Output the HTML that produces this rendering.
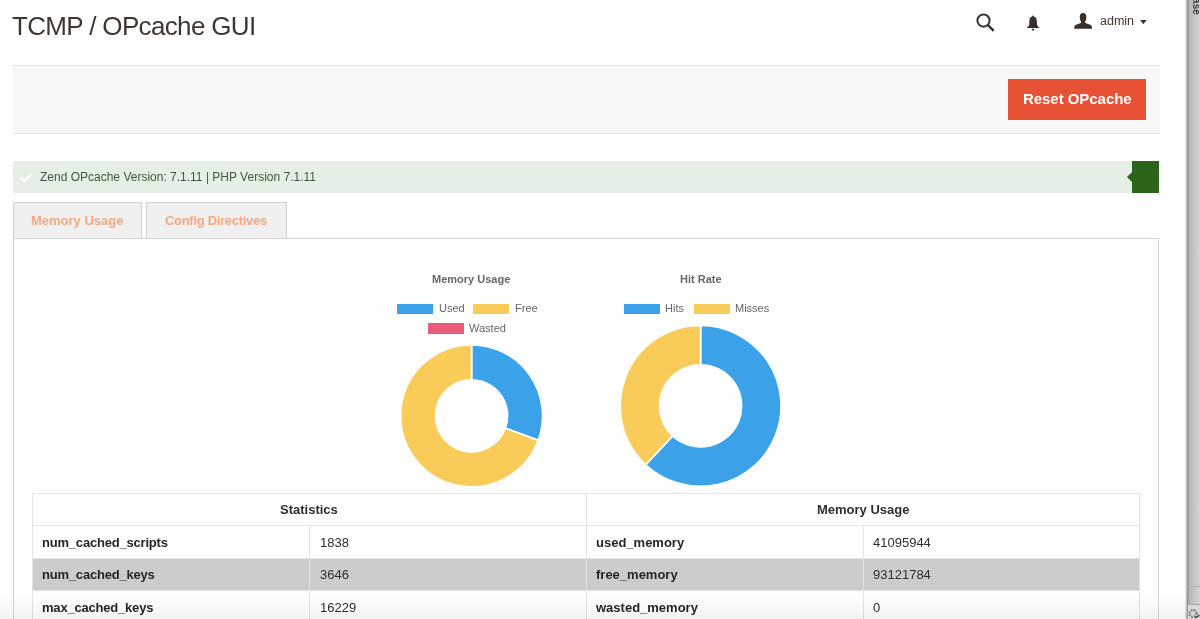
<!DOCTYPE html>
<html><head><meta charset="utf-8">
<style>
*{box-sizing:border-box;margin:0;padding:0}
html,body{width:1200px;height:619px;overflow:hidden;background:#fff}
body{position:relative;font-family:"Liberation Sans",sans-serif;color:#41362f}
.a{position:absolute;white-space:nowrap;line-height:1;will-change:transform}
#title{left:12px;top:12.5px;font-size:26px;letter-spacing:-0.65px;color:#41362f}
#admin{left:1099.5px;top:14.7px;font-size:12.5px;color:#41362f}
#strip{position:absolute;left:1185px;top:0;width:15px;height:619px;background:linear-gradient(90deg,#f4f4f4 0px,#dadada 1px,#a8a8a8 2px,#8f8f8f 3px,#b0b0b0 4px,#b9b9b9 5px,#d4d4d4 15px)}
#stript{position:absolute;left:1201px;top:-23.5px;transform-origin:0 0;transform:rotate(90deg);will-change:transform;font-size:10px;font-weight:bold;line-height:1;color:#3a3a3a;white-space:nowrap}
#actions{position:absolute;left:13px;top:65px;width:1147px;height:69px;background:#f8f8f8;border-top:1px solid #e3e3e3;border-bottom:1px solid #e3e3e3}
#btn{position:absolute;left:1008px;top:79px;width:138px;height:41px;background:#e85234}
#btntxt{left:1022.5px;top:91px;font-size:15px;font-weight:bold;letter-spacing:-0.05px;color:#fff}
#msg{position:absolute;left:13px;top:161px;width:1119px;height:32px;background:#e5efe5}
#msgblk{position:absolute;left:1132px;top:161px;width:27px;height:32px;background:#2c6519}
#msgtxt{left:40px;top:171.4px;font-size:12px;color:#3d5a3b}
.tab{position:absolute;top:202px;height:37px;background:#f0f0f0;border:1px solid #d0d0d0;border-bottom:none}
.tabtxt{top:214.3px;font-size:13px;font-weight:bold;color:#f1a983}
#panel{position:absolute;left:13px;top:238px;width:1146px;height:400px;border:1px solid #d4d4d4;background:#fff}
.ct{font-size:11px;font-weight:bold;color:#666}
.lg{font-size:11px;color:#666}
.box{position:absolute;height:10.5px;width:36px}
.hl{position:absolute;left:32px;width:1108px;height:1px;background:#e3e3e3}
.vl{position:absolute;width:1px;height:200px;background:#e3e3e3}
.gr{position:absolute;left:32px;width:1108px;height:32px;background:#cccccc}
.th,.tk,.td{font-size:13px;color:#2e2e2e}
.tk{color:#262626}
.th{font-weight:bold}
.tk{font-weight:bold;letter-spacing:-0.2px}
#fade{position:absolute;left:0;top:595px;width:1187px;height:24px;background:linear-gradient(180deg,rgba(0,0,0,0),rgba(0,0,0,0.05))}
</style></head><body>
<div class="a" id="title">TCMP / OPcache GUI</div>

<!-- header icons -->
<svg style="position:absolute;left:970px;top:8px" width="180" height="30" viewBox="970 8 180 30">
  <circle cx="983.5" cy="20.6" r="6.1" fill="none" stroke="#3a302b" stroke-width="2"/>
  <line x1="988" y1="25.1" x2="993.7" y2="30.8" stroke="#3a302b" stroke-width="2.4" stroke-linecap="butt"/>
  <path d="M1033 15.5 C1032.5 15.5 1032.3 16 1032.2 16.6 C1030.4 17 1029.5 18.5 1029.4 20.5 L1029.2 24.5 C1029 26 1028 26.9 1026.9 27.3 L1026.9 27.9 L1039.3 27.9 L1039.3 27.3 C1038.2 26.9 1037.2 26 1037 24.5 L1036.8 20.5 C1036.6 18.5 1035.6 17 1033.8 16.6 C1033.7 16 1033.5 15.5 1033 15.5 Z" fill="#3a302b"/>
  <path d="M1031.7 28.7 L1034.2 28.7 C1034.2 29.9 1033.7 30.6 1032.95 30.6 C1032.2 30.6 1031.7 29.9 1031.7 28.7 Z" fill="#3a302b"/>
  <path d="M1083.1 12.9 C1085.4 12.9 1086.4 14.5 1086.4 17 C1086.4 19.2 1085.7 20.9 1085.1 21.6 L1085.1 22.8 C1086.1 23.6 1089.5 24.3 1091 25.2 C1091.8 25.8 1092 27 1092 28.8 L1074.2 28.8 C1074.2 27 1074.4 25.8 1075.2 25.2 C1076.7 24.3 1080.1 23.6 1081.1 22.8 L1081.1 21.6 C1080.5 20.9 1079.8 19.2 1079.8 17 C1079.8 14.5 1080.8 12.9 1083.1 12.9 Z" fill="#3a302b"/>
  <path d="M1140 20 L1146.7 20 L1143.35 24.2 Z" fill="#41362f"/>
</svg>
<div class="a" id="admin">admin</div>
<div id="strip"></div><div style="position:absolute;left:1188px;top:586px;width:12px;height:1px;background:#b4b4b4"></div><div style="position:absolute;left:1188px;top:604px;width:12px;height:1px;background:#a9a9a9"></div><div style="position:absolute;left:1188px;top:605px;width:12px;height:14px;background:#d9d9d9"></div><svg style="position:absolute;left:1186px;top:605px" width="14" height="14" viewBox="0 0 14 14"><circle cx="7" cy="8.5" r="3.5" fill="none" stroke="#777" stroke-width="2.2" stroke-dasharray="1.6 1.2"/><path d="M9 12.5 Q12 12 13.5 10" fill="none" stroke="#444" stroke-width="1.3"/></svg><div id="stript">Release</div>

<div id="actions"></div>
<div id="btn"></div>
<div class="a" id="btntxt">Reset OPcache</div>

<div id="msg"></div>
<div id="msgblk"></div>
<svg style="position:absolute;left:1126px;top:170px" width="8" height="16" viewBox="0 0 8 16"><path d="M6 2 L1 7 L6 12 Z" fill="#2c6519"/></svg>
<svg style="position:absolute;left:19px;top:171px" width="16" height="14" viewBox="0 0 16 14"><path d="M1.5 6.5 L5.3 10.2 L12.8 2.8" fill="none" stroke="#fafdfa" stroke-width="2.3"/></svg>
<div class="a" id="msgtxt">Zend OPcache Version: 7.1.11 | PHP Version 7.1.11</div>

<div class="tab" style="left:13px;width:129px"></div>
<div class="tab" style="left:146px;width:141px"></div>
<div id="panel"></div>
<div class="a tabtxt" style="left:31px">Memory Usage</div>
<div class="a tabtxt" style="left:165px;letter-spacing:-0.3px">Config Directives</div>

<!-- charts -->
<div class="a ct" style="left:432px;top:274px">Memory Usage</div>
<div class="box" style="left:397px;top:303.5px;background:#3ba1e8"></div>
<div class="a lg" style="left:439px;top:303px">Used</div>
<div class="box" style="left:473px;top:303.5px;background:#f9cb58"></div>
<div class="a lg" style="left:515px;top:303px">Free</div>
<div class="box" style="left:428px;top:323.2px;background:#ec5c7c"></div>
<div class="a lg" style="left:469px;top:323px">Wasted</div>

<div class="a ct" style="left:680px;top:274px">Hit Rate</div>
<div class="box" style="left:624px;top:303.5px;background:#3ba1e8"></div>
<div class="a lg" style="left:665px;top:303px">Hits</div>
<div class="box" style="left:694px;top:303.5px;background:#f9cb58"></div>
<div class="a lg" style="left:735px;top:303px">Misses</div>

<svg id="donuts" style="position:absolute;left:0;top:0" width="1200" height="619">
<path d="M471.60 344.80 A71 71 0 0 1 538.22 440.35 L505.38 428.25 A36 36 0 0 0 471.60 379.80 Z" fill="#3ba1e8" stroke="#fff" stroke-width="1.7" stroke-linejoin="round"/>
<path d="M538.22 440.35 A71 71 0 1 1 471.60 344.80 L471.60 379.80 A36 36 0 1 0 505.38 428.25 Z" fill="#f9cb58" stroke="#fff" stroke-width="1.7" stroke-linejoin="round"/>
<path d="M700.60 325.40 A80.5 80.5 0 1 1 645.70 464.77 L672.64 435.89 A41 41 0 1 0 700.60 364.90 Z" fill="#3ba1e8" stroke="#fff" stroke-width="1.7" stroke-linejoin="round"/>
<path d="M645.70 464.77 A80.5 80.5 0 0 1 700.60 325.40 L700.60 364.90 A41 41 0 0 0 672.64 435.89 Z" fill="#f9cb58" stroke="#fff" stroke-width="1.7" stroke-linejoin="round"/>
</svg>

<div id="tbl">
<div class="hl" style="top:493px"></div>
<div class="hl" style="top:525px"></div>
<div class="gr" style="top:558px"></div>
<div class="hl" style="top:558px"></div>
<div class="hl" style="top:590px"></div>
<div class="vl" style="left:32px;top:493px"></div>
<div class="vl" style="left:309px;top:525px"></div>
<div class="vl" style="left:586px;top:493px"></div>
<div class="vl" style="left:863px;top:525px"></div>
<div class="vl" style="left:1139px;top:493px"></div>
<div class="a th" style="left:280px;top:503px">Statistics</div>
<div class="a th" style="left:817px;top:503px">Memory Usage</div>
<div class="a tk" style="left:41.5px;top:536px">num_cached_scripts</div>
<div class="a td" style="left:319.5px;top:536px">1838</div>
<div class="a tk" style="left:41.5px;top:568px">num_cached_keys</div>
<div class="a td" style="left:319.5px;top:568px">3646</div>
<div class="a tk" style="left:41.5px;top:601px">max_cached_keys</div>
<div class="a td" style="left:319.5px;top:601px">16229</div>
<div class="a tk" style="left:596px;top:536px;letter-spacing:0">used_memory</div>
<div class="a td" style="left:873px;top:536px">41095944</div>
<div class="a tk" style="left:596px;top:568px;letter-spacing:0">free_memory</div>
<div class="a td" style="left:873px;top:568px">93121784</div>
<div class="a tk" style="left:596px;top:601px;letter-spacing:0">wasted_memory</div>
<div class="a td" style="left:873px;top:601px">0</div>
</div>
<div id="fade"></div>
</body></html>
